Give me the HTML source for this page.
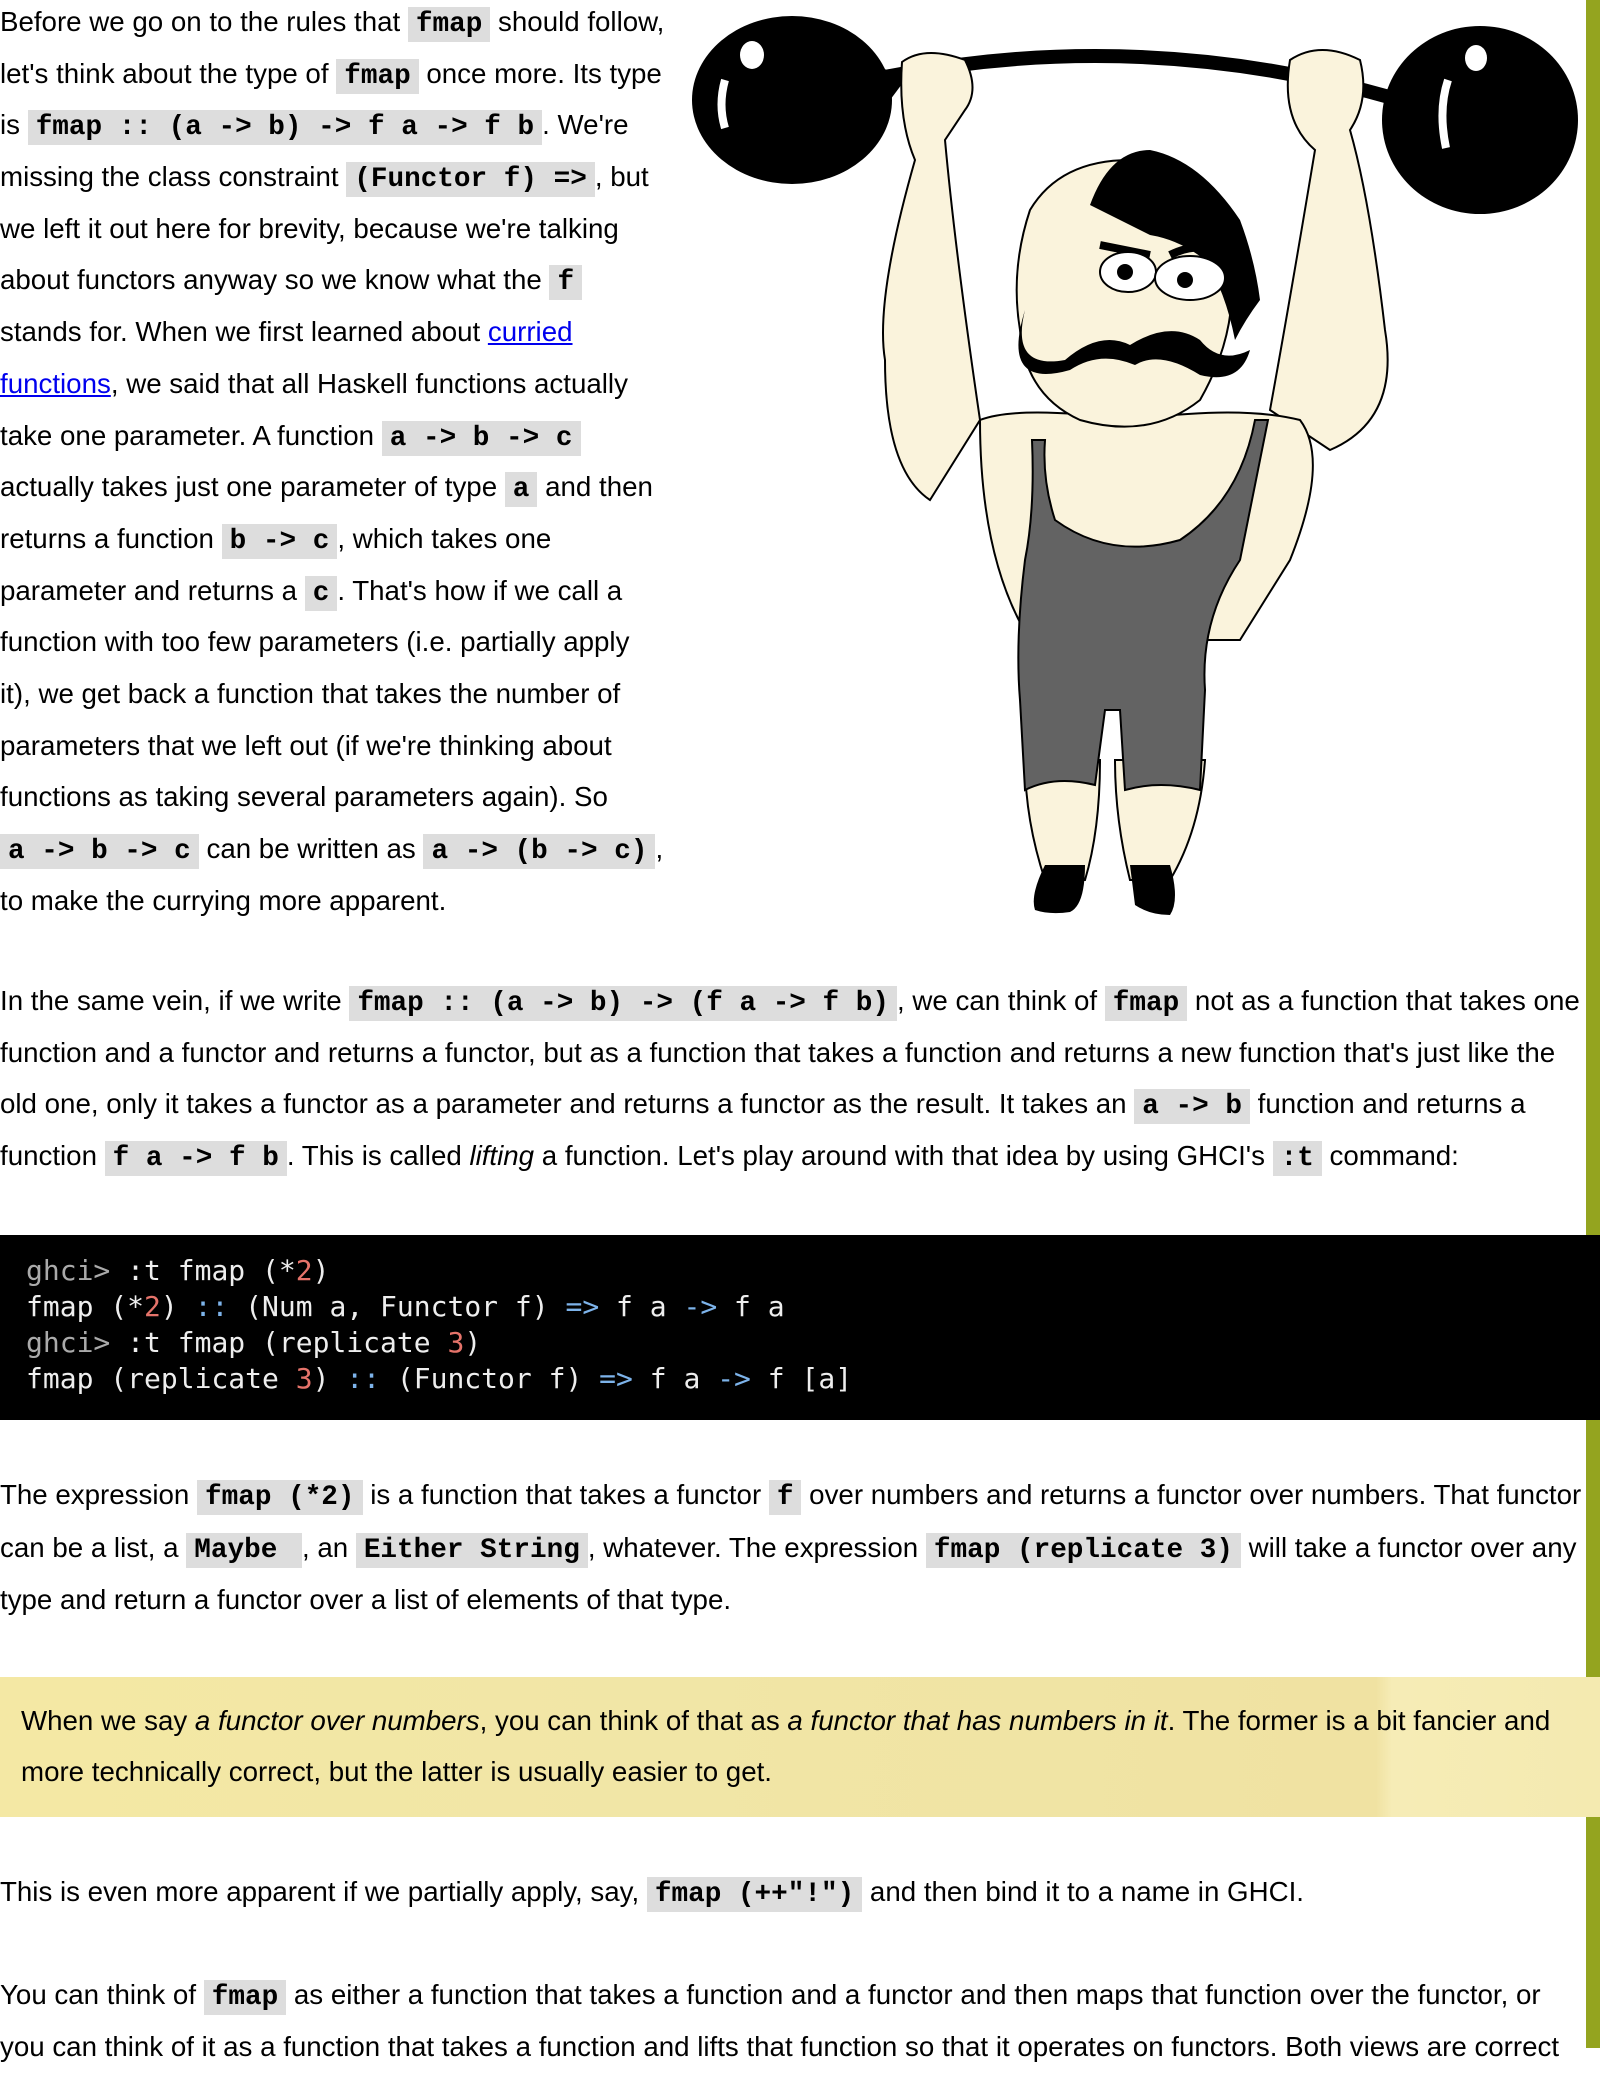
<!DOCTYPE html>
<html><head><meta charset="utf-8">
<style>
html,body{margin:0;padding:0;}
body{width:1600px;height:2048px;position:relative;overflow:hidden;background:#fff;font-family:"Liberation Sans",Arial,sans-serif;font-size:27.7px;color:#000;}
.l{position:absolute;left:0;white-space:nowrap;line-height:52px;height:52px;}
code{font-family:"Liberation Mono","Courier New",monospace;font-weight:bold;font-size:27.7px;background:#ddd;padding:2px 8px;}
a{color:#00e;text-decoration:underline;}
#bar{position:absolute;left:1586px;top:0;width:14px;height:2048px;background:#94a41f;}
#code{position:absolute;left:0;top:1235px;width:1600px;height:185px;background:#000;}
#code pre{margin:0;position:absolute;left:26px;top:18px;font-family:"DejaVu Sans Mono",monospace;font-size:28px;line-height:36px;color:#eee;}
.p{color:#aaa}.n{color:#e5736a}.o{color:#7db3ea}
#note{position:absolute;left:0;top:1677px;width:1600px;height:140px;background:linear-gradient(90deg,#f4e8a4 0%,#f1e6a6 40%,#f0e2a2 86%,#f6ecb6 87%,#f4eab0 100%);}
</style></head><body>
<div id="bar"></div>

<svg style="position:absolute;left:680px;top:0" width="920" height="930" viewBox="0 0 920 930">
 <path d="M200 78 Q460 25 720 100" stroke="#000" stroke-width="14" fill="none"/>
 <ellipse cx="112" cy="100" rx="100" ry="84" fill="#000"/>
 <path d="M170 50 L225 80 L180 140 Z" fill="#000"/>
 <ellipse cx="800" cy="120" rx="98" ry="94" fill="#000"/>
 <path d="M700 95 L730 90 L720 130 Z" fill="#000"/>
 <ellipse cx="72" cy="55" rx="12" ry="14" fill="#fff"/>
 <path d="M45 80 Q38 105 45 128" stroke="#fff" stroke-width="8" fill="none"/>
 <ellipse cx="796" cy="58" rx="11" ry="13" fill="#fff"/>
 <path d="M768 80 Q758 110 766 148" stroke="#fff" stroke-width="8" fill="none"/>
 <g fill="#faf3dc" stroke="#000" stroke-width="2">
  <path d="M222 62 Q245 45 285 60 Q300 90 285 110 L265 140 Q275 250 300 420 L250 500 Q205 470 205 360 Q195 300 235 160 Q218 120 222 62 Z"/>
  <path d="M610 60 Q640 40 680 60 Q690 100 670 130 Q690 200 705 330 Q720 420 650 450 L590 410 Q610 300 635 150 Q600 120 610 60 Z"/>
  <path d="M300 420 Q340 405 450 420 Q560 405 620 420 Q650 460 610 560 L560 640 L350 640 Q300 560 300 420 Z"/>
  <path d="M345 760 L420 760 Q420 830 405 880 L365 880 Q345 820 345 760 Z"/>
  <path d="M435 760 L525 760 Q520 830 490 880 L450 880 Q435 820 435 760 Z"/>
  <path d="M350 210 Q380 160 450 160 Q530 170 550 260 Q560 330 520 400 Q470 440 400 420 Q345 395 340 330 Q330 270 350 210 Z"/>
 </g>
 <path d="M352 440 Q355 510 345 560 Q335 640 340 700 L345 790 Q375 775 415 785 L425 710 L440 710 L445 790 Q480 780 520 790 L525 690 Q520 620 560 560 L588 420 L575 420 Q560 500 500 540 Q430 560 375 520 Q362 480 365 440 Z" fill="#636363" stroke="#000" stroke-width="2"/>
 <path d="M410 205 Q430 150 470 150 Q520 160 560 220 Q575 260 580 300 Q565 320 555 340 Q545 290 525 260 Q500 240 470 235 Q440 220 410 205 Z" fill="#000"/>
 <path d="M420 245 L470 255 M490 255 Q520 240 545 255" stroke="#000" stroke-width="8" fill="none"/>
 <ellipse cx="448" cy="272" rx="28" ry="20" fill="#fff" stroke="#000" stroke-width="2"/>
 <ellipse cx="510" cy="278" rx="35" ry="22" fill="#fff" stroke="#000" stroke-width="2"/>
 <circle cx="445" cy="272" r="8" fill="#000"/><circle cx="505" cy="280" r="8" fill="#000"/>
 <path d="M345 310 Q330 370 385 360 Q420 330 450 345 Q490 320 520 340 Q540 365 570 350 Q560 385 520 375 Q480 350 455 365 Q420 350 390 370 Q320 390 345 310 Z" fill="#000"/>
 <path d="M365 865 L405 865 Q405 905 390 912 Q370 915 355 910 Q350 895 365 865 Z" fill="#000"/>
 <path d="M450 865 L490 865 Q500 900 490 915 Q470 915 455 905 Z" fill="#000"/>
</svg>

<div class="l" style="top:-4px">Before we go on to the rules that <code>fmap</code> should follow,</div>
<div class="l" style="top:48px">let's think about the type of <code>fmap</code> once more. Its type</div>
<div class="l" style="top:99px">is <code>fmap :: (a -&gt; b) -&gt; f a -&gt; f b</code>. We're</div>
<div class="l" style="top:151px">missing the class constraint <code>(Functor f) =&gt;</code>, but</div>
<div class="l" style="top:203px">we left it out here for brevity, because we're talking</div>
<div class="l" style="top:254px">about functors anyway so we know what the <code>f</code></div>
<div class="l" style="top:306px">stands for. When we first learned about <a>curried</a></div>
<div class="l" style="top:358px"><a>functions</a>, we said that all Haskell functions actually</div>
<div class="l" style="top:410px">take one parameter. A function <code>a -&gt; b -&gt; c</code></div>
<div class="l" style="top:461px">actually takes just one parameter of type <code>a</code> and then</div>
<div class="l" style="top:513px">returns a function <code>b -&gt; c</code>, which takes one</div>
<div class="l" style="top:565px">parameter and returns a <code>c</code>. That's how if we call a</div>
<div class="l" style="top:616px">function with too few parameters (i.e. partially apply</div>
<div class="l" style="top:668px">it), we get back a function that takes the number of</div>
<div class="l" style="top:720px">parameters that we left out (if we're thinking about</div>
<div class="l" style="top:771px">functions as taking several parameters again). So</div>
<div class="l" style="top:823px"><code>a -&gt; b -&gt; c</code> can be written as <code>a -&gt; (b -&gt; c)</code>,</div>
<div class="l" style="top:875px">to make the currying more apparent.</div>

<div class="l" style="top:975px">In the same vein, if we write <code>fmap :: (a -&gt; b) -&gt; (f a -&gt; f b)</code>, we can think of <code>fmap</code> not as a function that takes one</div>
<div class="l" style="top:1027px">function and a functor and returns a functor, but as a function that takes a function and returns a new function that's just like the</div>
<div class="l" style="top:1078px">old one, only it takes a functor as a parameter and returns a functor as the result. It takes an <code>a -&gt; b</code> function and returns a</div>
<div class="l" style="top:1130px">function <code>f a -&gt; f b</code>. This is called <i>lifting</i> a function. Let's play around with that idea by using GHCI's <code>:t</code> command:</div>

<div id="code"><pre><span class="p">ghci&gt;</span> :t fmap (*<span class="n">2</span>)
fmap (*<span class="n">2</span>) <span class="o">::</span> (Num a, Functor f) <span class="o">=&gt;</span> f a <span class="o">-&gt;</span> f a
<span class="p">ghci&gt;</span> :t fmap (replicate <span class="n">3</span>)
fmap (replicate <span class="n">3</span>) <span class="o">::</span> (Functor f) <span class="o">=&gt;</span> f a <span class="o">-&gt;</span> f [a]</pre></div>

<div class="l" style="top:1469px">The expression <code>fmap (*2)</code> is a function that takes a functor <code>f</code> over numbers and returns a functor over numbers. That functor</div>
<div class="l" style="top:1522px">can be a list, a <code>Maybe </code>, an <code>Either String</code>, whatever. The expression <code>fmap (replicate 3)</code> will take a functor over any</div>
<div class="l" style="top:1574px">type and return a functor over a list of elements of that type.</div>

<div id="note"></div>
<div class="l" style="top:1695px;left:21px">When we say <i>a functor over numbers</i>, you can think of that as <i>a functor that has numbers in it</i>. The former is a bit fancier and</div>
<div class="l" style="top:1746px;left:21px">more technically correct, but the latter is usually easier to get.</div>

<div class="l" style="top:1866px">This is even more apparent if we partially apply, say, <code>fmap (++"!")</code> and then bind it to a name in GHCI.</div>

<div class="l" style="top:1969px">You can think of <code>fmap</code> as either a function that takes a function and a functor and then maps that function over the functor, or</div>
<div class="l" style="top:2021px">you can think of it as a function that takes a function and lifts that function so that it operates on functors. Both views are correct</div>
</body></html>
